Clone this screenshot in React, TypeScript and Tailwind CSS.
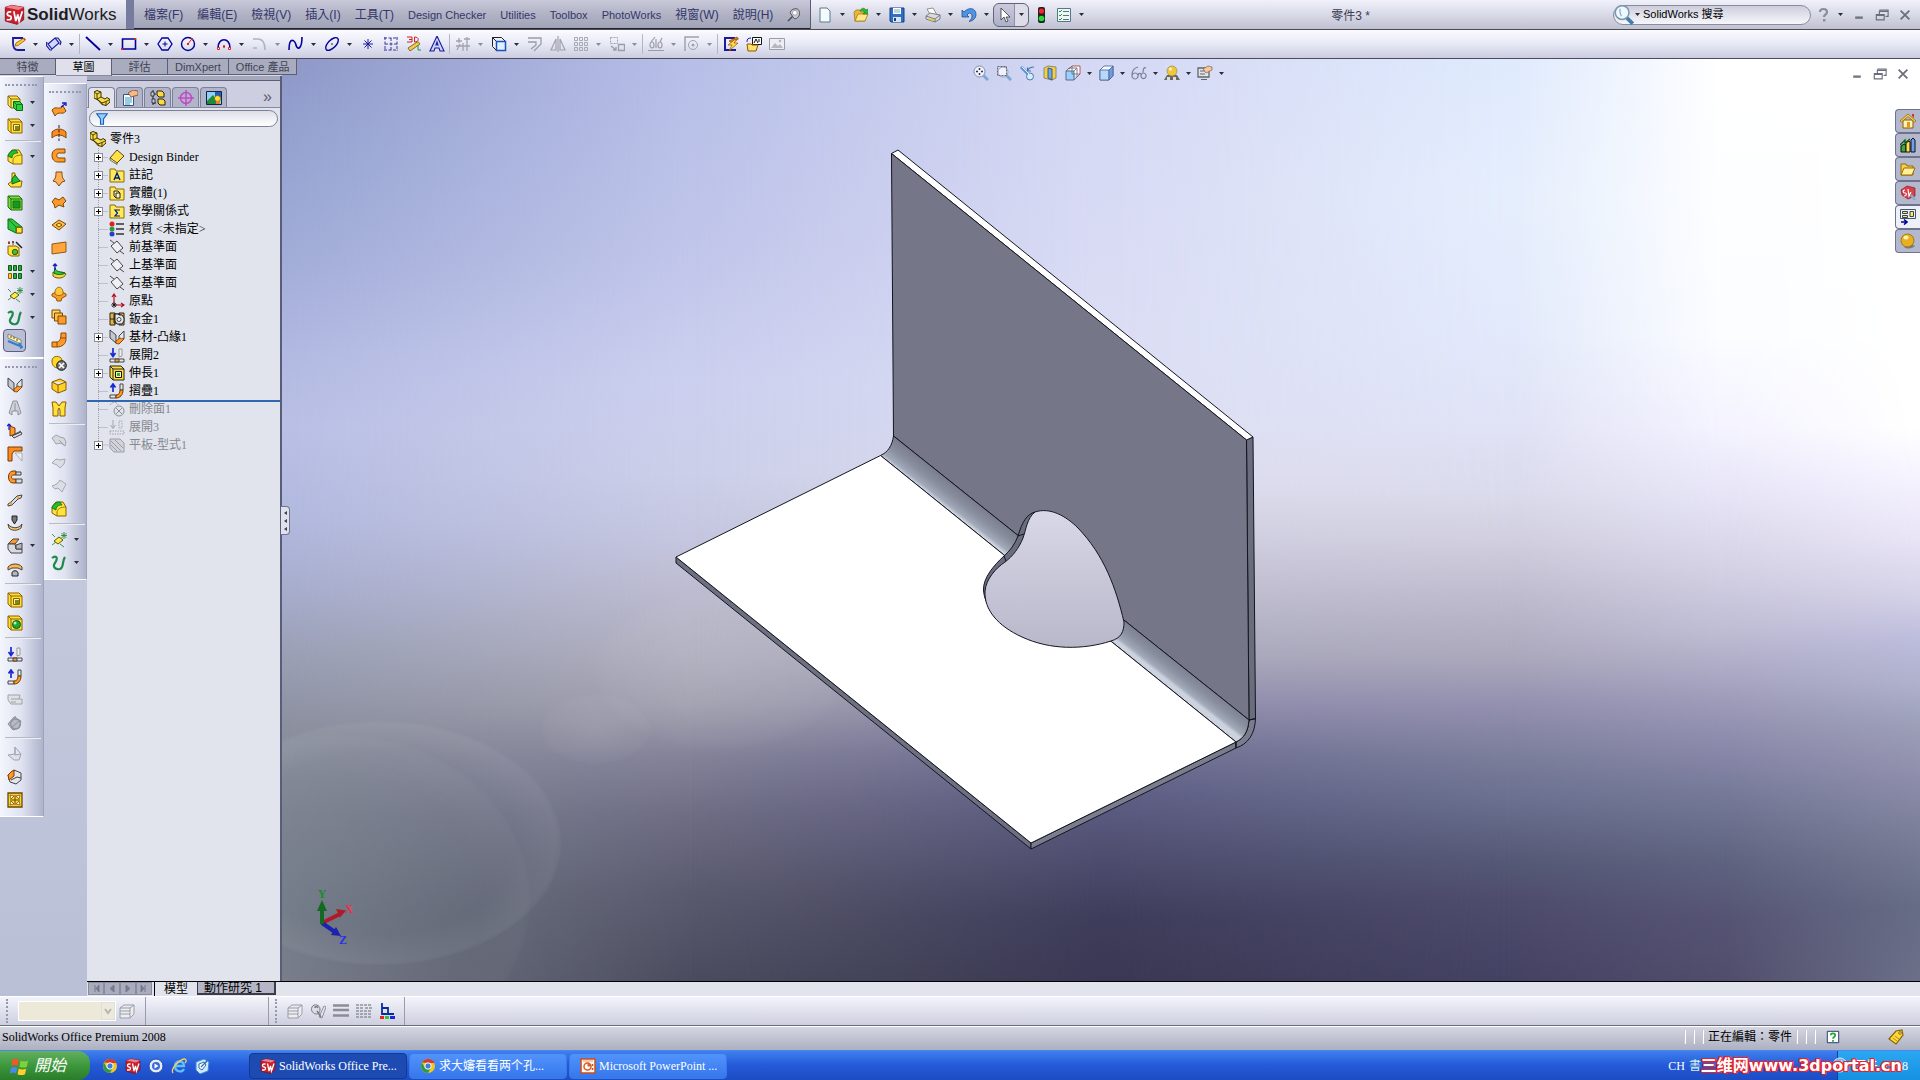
import React from 'react';
import { clsx } from 'clsx';

const ICONS: Record<string, React.ReactNode> = {
  // standard toolbar
  new: <path d="M3 1h7l3 3v11H3z" fill="#f4fbff" stroke="#5a7a86" />,
  open: (
    <>
      <path d="M1 5l2-2h4l1 2h4v9H2z" fill="#e8b83a" stroke="#a87a10" strokeWidth=".8" />
      <path d="M2 14l3-7h10l-3 7z" fill="#ffe88a" stroke="#a87a10" strokeWidth=".8" />
      <path d="M7 4c1-3 4-4 6-1l1.500-1v5H10l1.500-1.500C11 4 9 3.500 7 4z" fill="#2fb52f" stroke="#0a6a10" strokeWidth=".5" />
    </>
  ),
  save: (
    <>
      <path d="M1 1h14v14H2l-1-1z" fill="#2f6fc4" stroke="#153f86" />
      <path d="M4 1h8v6H4z" fill="#fff" />
      <path d="M5 3h6M5 5h6" stroke="#8aa4c8" />
      <path d="M4 10h8v5H4z" fill="#d8e4f4" />
      <path d="M5 11h2v3H5z" fill="#153f86" />
    </>
  ),
  print: (
    <>
      <path d="M2 2l6-1 4 7-6 1z" fill="#fff" stroke="#777" strokeWidth=".8" />
      <path d="M1 9l4-3 10 2v4l-5 3-9-3z" fill="#d8dade" stroke="#666" strokeWidth=".8" />
      <path d="M1 9l9 3 5-4M10 12v3" fill="none" stroke="#666" strokeWidth=".8" />
      <path d="M4 12l5 1.500" stroke="#e8c82a" strokeWidth="1.500" />
    </>
  ),
  undo: <path d="M1 3v7h7L6 8c2-3 5-2 5 1 0 2-1 4-3 5.500 4-.5 7-3.500 7-7C15 1 8-.5 3 5z" fill="#4f94e0" stroke="#1d4f9a" strokeWidth=".8" />,
  cursor: <path d="M5 1v12l3-3 2 5 2-1-2-4h4z" fill="#fff" stroke="#333" strokeWidth=".8" />,
  traffic: (
    <>
      <rect x="5" y="0" width="7" height="16" rx="2" fill="#222" />
      <circle cx="8.500" cy="4" r="2.600" fill="#f22" />
      <circle cx="8.500" cy="11.500" r="2.800" fill="#2d3" />
    </>
  ),
  options: (
    <>
      <path d="M1.500 1.500h13v13h-13z" fill="#eef7f4" stroke="#578" />
      <path d="M7 4.500h6M7 8.500h6M7 12.500h6" stroke="#578" />
      <path d="M3 4l1 1 2-2M3 8l1 1 2-2M3 12l1 1 2-2" fill="none" stroke="#1a9a3a" />
    </>
  ),
  // sketch toolbar
  sketch: (
    <>
      <path d="M13 2H3v5c0 5 2 7 5 7h7" fill="none" stroke="#1a1a9a" strokeWidth="1.800" />
      <path d="M5 10l1-3 8-5 1.500 2L8 9.500z" fill="#ffc83a" stroke="#8a4a00" strokeWidth=".7" />
      <path d="M13 2.500l1-.8 1.500 2-1 .7z" fill="#d8402a" />
    </>
  ),
  dimension: <path d="M2 8l7-6 4 5-7 6zM1 6l-1 3 4 5 2 0M9 2l3 0 3 4-1 3" fill="#cfd8ff" stroke="#1a1a9a" strokeWidth="1.200" />,
  line: <path d="M1 1l14 13" stroke="#00009a" strokeWidth="1.800" />,
  rect: (
    <>
      <path d="M1.500 3h13v10h-13z" fill="none" stroke="#00009a" strokeWidth="1.600" />
      <path d="M13 2h2v2h-2zM0 12h2v2H0z" fill="#d22" />
    </>
  ),
  polygon: (
    <>
      <path d="M5 2h6l4 6-4 6H5L1 8z" fill="none" stroke="#00009a" strokeWidth="1.300" />
      <path d="M8 5.500v5M5.500 8h5" stroke="#00009a" />
    </>
  ),
  circle: (
    <>
      <circle cx="8" cy="8" r="6.500" fill="none" stroke="#00009a" strokeWidth="1.400" />
      <path d="M8 8l3-4" stroke="#d22" />
      <path d="M7 7h2v2H7zM11 2h2v2h-2z" fill="#d22" />
    </>
  ),
  arc: (
    <>
      <path d="M2 12C2 1 14 1 14 12" fill="none" stroke="#00009a" strokeWidth="1.600" />
      <path d="M1.500 11.500h2v2h-2zM12.500 11.500h2v2h-2zM7.500 9.500h1v2h-1z" fill="#fff" stroke="#d22" />
    </>
  ),
  cornerFillet: <path d="M1 3h5c5 0 7 4 7 11M1 12h4" fill="none" stroke="#b0b2bc" strokeWidth="1.600" />,
  spline: <path d="M1 14c0-14 6-10 7-5s6 5 6-8" fill="none" stroke="#00009a" strokeWidth="1.600" />,
  ellipse: (
    <>
      <ellipse cx="8" cy="8" rx="8" ry="4" transform="rotate(-45 8 8)" fill="none" stroke="#00009a" strokeWidth="1.400" />
      <path d="M7 7l2 2M9 7l-2 2" stroke="#888" />
    </>
  ),
  point: <path d="M8 3v10M3 8h10M4.500 4.500l7 7M11.500 4.500l-7 7" stroke="#1a1a9a" />,
  cutGrid: <path d="M1 2h14M1 14h14M2 1v14M14 1v14M8 2v12M2 8h12" fill="none" stroke="#3a3a9a" strokeDasharray="3 1.500" />,
  sketch3d: (
    <>
      <path d="M1 1h5v5H1M3 3.500h3M8.500 1v5c5 0 5-5 0-5z" fill="none" stroke="#c22" />
      <path d="M2 12l2 3 10-7-2-2.500z" fill="#ffc83a" stroke="#553" strokeWidth=".8" />
      <path d="M12 9v5h3" fill="none" stroke="#1a9a3a" />
    </>
  ),
  textA: <path d="M8 0L1 15h4l1-3h4l1 3h4zM7 9l1-3 1 3z" fill="#cdd4ff" stroke="#1a1a9a" strokeWidth="1.100" />,
  trim: <path d="M1 5h6M9 3h6M1 10h14M4 2v5M12 1v14M5 8l-3 6M8 7v8" stroke="#a0a2ac" strokeWidth="1.300" fill="none" />,
  convert: (
    <>
      <path d="M1.500 1.500h9l4 4v9h-9l-4-4z" fill="#eef0f6" stroke="#222" />
      <path d="M1.500 1.500l4 4" stroke="#222" />
      <path d="M5.500 5.500h9v9h-9z" fill="#dff0ff" stroke="#1a50c0" strokeWidth="1.500" />
    </>
  ),
  offset: <path d="M1 2h13v6l-7 7M1 6h8v3l-5 4" fill="none" stroke="#9a9ca6" strokeWidth="1.300" />,
  mirror: <path d="M8 0v16M6 3L1 14h5zM10 3l5 11h-5z" fill="none" stroke="#a0a2ac" strokeWidth="1.200" />,
  pattern: (
    <path d="M1.500 1.500h3v3h-3zM6.500 1.500h3v3h-3zM11.500 1.500h3v3h-3zM1.500 6.500h3v3h-3zM6.500 6.500h3v3h-3zM11.500 6.500h3v3h-3zM1.500 11.500h3v3h-3zM6.500 11.500h3v3h-3zM11.500 11.500h3v3h-3z" fill="none" stroke="#a6a8b2" />
  ),
  move: (
    <>
      <path d="M1.500 1.500h7v6h-7z" fill="none" stroke="#a0a2ac" strokeDasharray="2 1" />
      <path d="M9.500 8.500h6v6h-6zM2 10l5 4M7 11v3H4" fill="none" stroke="#9a9ca6" strokeWidth="1.300" />
    </>
  ),
  relations: <path d="M0 14.500h16M8 3v9M2 9c0-4 4-4 4 0s-4 4-4 0M10 9c0-4 4-4 4 0s-4 4-4 0M3 6l4-5M12 6l2-4" fill="none" stroke="#9a9ca6" strokeWidth="1.200" />,
  snap: (
    <>
      <path d="M1 15V1h14" fill="none" stroke="#a0a2ac" strokeWidth="1.500" />
      <circle cx="9" cy="9" r="4.500" fill="none" stroke="#a0a2ac" />
      <circle cx="9" cy="9" r="1.500" fill="#a0a2ac" />
    </>
  ),
  rapid: (
    <>
      <path d="M12 2H2v12h11" fill="none" stroke="#1a1a9a" strokeWidth="2" />
      <path d="M6 5l8-4 1.500 2L9 7z" fill="#e87a2a" stroke="#7a3a00" strokeWidth=".6" />
      <path d="M11 4L5 9h4l-3 6 9-8h-4l3-4z" fill="#ffe03a" stroke="#a04a00" strokeWidth=".7" />
    </>
  ),
  block: (
    <>
      <path d="M6.500 1.500h9v7h-9z" fill="#fff" stroke="#111" />
      <path d="M8 7l2-4 2 4M13 3v3" fill="none" stroke="#111" />
      <path d="M1 8h4l1 1h6l-2 6H2z" fill="#ffe06a" stroke="#8a5a00" />
      <path d="M1 6c0-3 1-4 4-4" fill="none" stroke="#1a1ac0" />
    </>
  ),
  picture: (
    <>
      <path d="M.5 2.500h15v11H.5z" fill="#eceef4" stroke="#9a9ca6" />
      <path d="M2 12l4-5 3 3 2-2 3 4z" fill="#b4b6c0" />
      <circle cx="11" cy="5" r="1.300" fill="#b4b6c0" />
    </>
  ),
  // heads-up view toolbar
  zoomFit: (
    <>
      <path d="M10 10l5 5" stroke="#7fa8d4" strokeWidth="3" />
      <circle cx="6.500" cy="6.500" r="5.500" fill="#eef2fc" stroke="#858da4" />
      <path d="M6.500 3v2M6.500 8v2M3 6.500h2M8 6.500h2" stroke="#334" strokeWidth="1.500" />
    </>
  ),
  zoomArea: (
    <>
      <path d="M10 10l5 5" stroke="#7fa8d4" strokeWidth="3" />
      <circle cx="7" cy="7" r="5" fill="#eef2ff" stroke="#98a0b0" />
      <path d="M1.500 1.500h9v9h-9z" fill="none" stroke="#667" strokeDasharray="2 1" />
    </>
  ),
  previous: (
    <>
      <path d="M2 2l8 8" stroke="#5b93cc" strokeWidth="3" />
      <circle cx="11" cy="11.500" r="3.500" fill="#d6ecff" stroke="#4a7aac" />
      <path d="M3 2l7 7" stroke="#e4f2ff" strokeWidth="1" />
      <path d="M15 2c-3 0-5 1-6 3M8.500 2.500V6H12" stroke="#3f78b8" strokeWidth="1.200" fill="none" />
    </>
  ),
  section: (
    <>
      <path d="M2 3l4-2 8 1v11l-4 2-8-2z" fill="#f0cf4a" stroke="#776" strokeWidth=".8" />
      <path d="M6 3l4 1v11l-4-2z" fill="#6fa8e8" stroke="#345" strokeWidth=".8" />
    </>
  ),
  orient: (
    <>
      <path d="M4 4l3-3h8v8l-3 3" fill="#fff" stroke="#a33" strokeWidth=".8" />
      <path d="M1 6h8v9H1z" fill="#9ccfff" stroke="#456" strokeWidth=".8" />
      <path d="M1 6l3-3h8l-3 3M9 15l3-3V3M7 1v8h8" fill="none" stroke="#567" strokeWidth=".8" />
    </>
  ),
  shaded: (
    <>
      <path d="M2 5l4-4h9v10l-4 4H2z" fill="#f2f9ff" stroke="#44619a" strokeWidth=".8" />
      <path d="M2 5h9v10H2z" fill="#b8d8fa" stroke="#44619a" strokeWidth=".8" />
      <path d="M11 5l4-4v10l-4 4z" fill="#6f9cdc" stroke="#44619a" strokeWidth=".8" />
    </>
  ),
  glasses: (
    <path d="M7 2C3 3 1 6 1 10M15 3c-2-1-3 1-3 5M7 10c1-2 2-2 3-1M4 8a3 3 0 1 0 .1 0M12.500 8a2.500 2.800 0 1 0 .1 0" fill="none" stroke="#7a8094" strokeWidth="1.200" />
  ),
  scene: (
    <>
      <path d="M0 15l3-5h10l3 5z" fill="#666" />
      <path d="M3 12h3v3H3zM9 12h3v3H9z" fill="#ddd" />
      <circle cx="8" cy="6" r="5" fill="#f2c63a" stroke="#9a8a50" strokeWidth=".7" />
      <circle cx="6.500" cy="4" r="1.600" fill="#fff6c8" />
    </>
  ),
  viewSettings: (
    <>
      <path d="M1 3h11v9H1z" fill="#dfe4ee" stroke="#666" strokeWidth="1.300" />
      <path d="M4 14.500h6M3 6h6M3 9h5" stroke="#666" />
      <path d="M6 4l5-3 4 1v3l-6 3z" fill="#f2c9a0" stroke="#8a5a3a" strokeWidth=".7" />
    </>
  ),
  // window buttons
  minimize: <path d="M4 10h8v2H4z" fill="#777b88" stroke="#555966" strokeWidth=".5" />,
  restore: <path d="M5 2.500h10v7h-3M5 4h10M1.500 7.500h9v6h-9zM1 8.500h10M5 3v4" fill="none" stroke="#6a6e7c" strokeWidth="1.300" />,
  close: <path d="M3 3l10 10M13 3L3 13" stroke="#6a6e7c" strokeWidth="2" />,
  help: (
    <>
      <path d="M5 5c0-4 7-4 7 0 0 3-3 2-3 5" fill="none" stroke="#8a8e9c" strokeWidth="2.200" />
      <path d="M8 12h2.500v2.500H8z" fill="#8a8e9c" />
    </>
  ),
  pin: (
    <>
      <path d="M1 15l5-5" stroke="#444" strokeWidth="1.500" />
      <path d="M4 6c-1-2 2-5 5-5 4-1 6 3 5 7-1 3-4 5-6 4z" fill="#c9ccd6" stroke="#444" />
      <circle cx="9" cy="5.500" r="2.700" fill="#fff" stroke="#777" strokeWidth=".6" />
    </>
  ),
  search: (
    <>
      <path d="M10 10l5 5" stroke="#3f7fac" strokeWidth="3" />
      <circle cx="6.500" cy="6" r="5.500" fill="#eef8ff" stroke="#7a9ab2" strokeWidth="1.200" />
      <path d="M5 3c-1 2 0 4 1 6" stroke="#9ab" fill="none" />
    </>
  ),
  // task pane
  home: (
    <>
      <path d="M3 7h10v8H3z" fill="#fff2b0" stroke="#8a5a00" />
      <path d="M0 8l8-7 8 7-1.500 1L8 3.500 1.500 9z" fill="#ffd24a" stroke="#8a5a00" strokeWidth=".7" />
      <path d="M7 9h3v6H7z" fill="#d89a2a" />
      <path d="M12 1h2v4l-2-2z" fill="#c33" />
    </>
  ),
  library: (
    <>
      <path d="M1 9l3-2 2 1v7H1z" fill="#3aa83a" stroke="#111" />
      <path d="M6 6l3-2 1 1v10H6z" fill="#ffe04a" stroke="#111" />
      <path d="M11 3l2-2 2 2v12h-4z" fill="#6f9ff0" stroke="#111" />
      <path d="M0 8l5-5v3l5-4" fill="none" stroke="#0a5a10" strokeWidth="1.300" />
    </>
  ),
  folder: (
    <>
      <path d="M1 3h5l1 2h6v9H1z" fill="#f4d050" stroke="#9a6a00" />
      <path d="M1 14l3-7h11l-3 7z" fill="#ffee9a" stroke="#9a6a00" />
    </>
  ),
  swSearch: (
    <>
      <path d="M1 5l6-4 8 2v8l-7 3-6-4z" fill="#d8404a" stroke="#8a1a22" strokeWidth=".7" />
      <path d="M5 5c-3 0-2 3 0 3s2 3-1 3M8 4l1 7 2-4" stroke="#fff" fill="none" strokeWidth="1.200" />
      <path d="M11 10l4 5" stroke="#8aaccc" strokeWidth="2.500" />
    </>
  ),
  palette: (
    <>
      <path d="M.5.5h15v9H.5z" fill="#eef0f6" stroke="#456" />
      <path d="M2.500 2.500h5v2h-5zM10 2.500h3.500v5H10zM2.500 6.500h5v2h-5z" fill="#ffe860" stroke="#345" />
      <path d="M1 13h5M4 10.500L7 13l-3 2.500" stroke="#00009a" strokeWidth="1.600" fill="none" />
    </>
  ),
  sphere: (
    <>
      <path d="M4 14c4 3 9 1 11-1l-4-2z" fill="#556" opacity=".6" />
      <circle cx="7.500" cy="7.500" r="6.500" fill="#e8b020" stroke="#8a6200" strokeWidth=".7" />
      <ellipse cx="6" cy="4.500" rx="2.600" ry="2" fill="#fff3a8" />
    </>
  ),
  // features
  boss: (
    <>
      <path d="M1 1h9l3 3v9H4l-3-3z" fill="#ffe95a" stroke="#8a6200" />
      <path d="M1 1l3 3h9M4 4v9" fill="none" stroke="#8a6200" />
      <path d="M6.500 6.500h6l3 3v6h-6l-3-3z" fill="#2fcf3f" stroke="#0a6a14" />
      <path d="M6.500 6.500l3 3h6M9.500 9.500v6" fill="none" stroke="#0a6a14" strokeWidth=".8" />
    </>
  ),
  cut: (
    <>
      <path d="M1 1h11l3 3v11H4l-3-3z" fill="#ffdf3a" stroke="#8a6200" />
      <path d="M1 1l3 3h11M4 4v11" fill="none" stroke="#8a6200" />
      <path d="M6.500 6.500h6v6h-6z" fill="#fff29a" stroke="#8a6200" />
      <path d="M8 8h4v4H8z" fill="#7a8a1a" />
    </>
  ),
  fillet: (
    <>
      <path d="M1 6l4-5h7l3 5v9H6l-5-3z" fill="#ffe23a" stroke="#8a6200" />
      <path d="M1 7c1-4 4-6 8-6l2 3c-4 0-6 2-6 5z" fill="#1fbf2f" stroke="#0a6a14" strokeWidth=".8" />
      <path d="M6 15v-3c0-4 3-6 9-6" fill="none" stroke="#8a6200" strokeWidth=".8" />
    </>
  ),
  rib: (
    <>
      <path d="M5 1h3v8h7l-1 6H4l-3-3 4-3z" fill="#ffe23a" stroke="#8a6200" />
      <path d="M8 3l5 6-8 3V7z" fill="#1fbf2f" stroke="#0a6a14" />
    </>
  ),
  shell: (
    <>
      <path d="M1 1h11l3 3v11H4l-3-3z" fill="#6fe04a" stroke="#2a6a00" />
      <path d="M1 1l3 3h11M4 4v11" fill="none" stroke="#2a6a00" />
      <path d="M6 6h7v7H6z" fill="#0f9a20" stroke="#2a6a00" />
    </>
  ),
  draft: (
    <>
      <path d="M1 1h4l10 8v6H9L1 11z" fill="#2fc73f" stroke="#0a6a14" />
      <path d="M1 1l8 8v6M9 9h6" fill="none" stroke="#0a6a14" strokeWidth=".8" />
      <path d="M9.500 9.500h5.500v5.500H9.500z" fill="#ffe23a" stroke="#8a6200" />
    </>
  ),
  wizard: (
    <>
      <path d="M1 5h8l3 2v8H4l-3-2z" fill="#ffe23a" stroke="#8a6200" />
      <circle cx="8" cy="11" r="2.700" fill="#3fbf3f" stroke="#3a5a00" />
      <path d="M9 1l6 6M1 2h2M5 1h2" stroke="#222" strokeWidth="1.500" />
      <path d="M2 0v3M6 2v2" stroke="#c22" />
    </>
  ),
  dots: (
    <>
      <path d="M1.500 1.500h3v5h-3zM6.500 1.500h3v5h-3zM11.500 1.500h3v5h-3zM6.500 9.500h3v5h-3zM11.500 9.500h3v5h-3z" fill="#2fa83f" stroke="#0a5a14" />
      <path d="M1.500 9.500h3v5h-3z" fill="#ffc83a" stroke="#8a6200" />
    </>
  ),
  refGeo: (
    <>
      <path d="M1 2l3 3M9 12l4 3M1 13l4-3M13 0v7M10 3.500h6M10.500 1l5 5M15.500 1l-5 5" stroke="#2a8a3a" strokeWidth=".9" />
      <path d="M3 9l5-4 4 3-5 4z" fill="#ffe84a" stroke="#5a5a00" />
    </>
  ),
  curve: <path d="M1 3c5-4 6 1 3 5s1 7 5 6 2-8 5-12" fill="none" stroke="#1f8a4a" strokeWidth="2.200" />,
  measure: (
    <>
      <path d="M1 1l13 6v4L1 5z" fill="#fff6a8" stroke="#665" strokeWidth=".7" />
      <path d="M4 3v2M7 4v2M10 6v2" stroke="#444" />
      <path d="M1 8l12 5M13 15l2-1-3-4" stroke="#2f7fd0" strokeWidth="2" fill="none" />
    </>
  ),
  // sheet metal
  baseFlange: (
    <>
      <path d="M1 1l6 5v8l-6-5z" fill="#c4c8d0" stroke="#333" strokeWidth=".9" />
      <path d="M10 7l5-5v8l-5 5z" fill="#e4e6ea" stroke="#333" strokeWidth=".9" />
      <path d="M7 12l4-3c2 1 2 1 3 0l1 1-5 5-3-.5z" fill="#ff9a2a" stroke="#7a3a00" strokeWidth=".8" />
    </>
  ),
  lofted: <path d="M6 1h4l4 12-3 2v-4H5v4l-3-2zM8 3v8" fill="#d0d2d8" stroke="#8f929c" />,
  edgeFlange: (
    <>
      <path d="M3 3l5 2v6l-5 2z" fill="#ff9a2a" stroke="#7a3a00" />
      <path d="M5 13l9-4 1 2-8 4zM8 11l6-3" fill="#dcdee4" stroke="#444" />
      <path d="M2 7V1M0 3l2-2 2 2" stroke="#1a1ac0" fill="none" strokeWidth="1.200" />
    </>
  ),
  miter: (
    <>
      <path d="M1 1h14v4H7l-2 3v7H1z" fill="#ff8a1f" stroke="#7a3a00" />
      <path d="M8 7h7v8z" fill="#eef0f4" stroke="#888" strokeWidth=".6" />
    </>
  ),
  hem: (
    <>
      <path d="M9 2H6C0 2 0 14 6 14h3v-4H6c-2 0-2-4 0-4h3z" fill="#ff9a2a" stroke="#7a3a00" />
      <path d="M9 3h5v3H9zM9 10h6v4H9z" fill="#d8dae0" stroke="#444" />
    </>
  ),
  jog: (
    <>
      <path d="M1 12l3-2 6-6 5-1-1 3-3 1-6 6-4 1z" fill="#d8dae0" stroke="#444" />
      <path d="M3 12l2-1M10 6l2-1" stroke="#ff9a2a" strokeWidth="2.500" />
    </>
  ),
  sketchedBend: (
    <>
      <path d="M5 1h5v4l-2.500 4L5 5z" fill="#777" stroke="#222" />
      <path d="M1 9c3 5 11 5 14 0l-1 4c-4 3-9 3-12 0z" fill="#ffc86a" stroke="#444" />
    </>
  ),
  corner: (
    <>
      <path d="M1 6l5-5h6l-4 5z" fill="#ff9a2a" stroke="#444" />
      <path d="M1 6h7l1 5h6v4H4l-3-4z" fill="#d8dae0" stroke="#444" />
      <path d="M9 7l6-2v6H9z" fill="#b4b6be" stroke="#444" />
    </>
  ),
  form: (
    <>
      <path d="M1 6c3-4 11-4 14 0v3l-4-2H5L1 9z" fill="#ffb84a" stroke="#444" />
      <path d="M5 15v-3c0-3 6-3 6 0v3z" fill="#b4b6be" stroke="#222" />
    </>
  ),
  hole: (
    <>
      <path d="M1 1h11l3 3v11H4l-3-3z" fill="#ffdf3a" stroke="#8a6200" />
      <path d="M1 1l3 3h11M4 4v11" fill="none" stroke="#8a6200" />
      <circle cx="9.500" cy="9.500" r="4" fill="#1fa82f" stroke="#0a5a14" />
      <circle cx="8" cy="8" r="1.500" fill="#b8f0c0" />
    </>
  ),
  unfold: (
    <>
      <path d="M4 1v8M1.500 6L4 9.500 6.500 6" stroke="#1a2ad0" strokeWidth="1.700" fill="none" />
      <path d="M10 2h3v7l-3 1z" fill="#eee" stroke="#999" />
      <path d="M1 12h14v3H1z" fill="#e8eaee" stroke="#444" />
      <path d="M6 12h4v3H6z" fill="#ff9a2a" stroke="#444" />
    </>
  ),
  fold: (
    <>
      <path d="M4 9V1M1.500 4.500L4 1l2.500 3.500" stroke="#1a2ad0" strokeWidth="1.700" fill="none" />
      <path d="M11 1h3v6h-3zM1 12h6v3H1z" fill="#e8eaee" stroke="#444" />
      <path d="M11 7h3c0 5-3 8-7 8v-3c3 0 4-2 4-5z" fill="#ff9a2a" stroke="#6a3a00" />
    </>
  ),
  flatGray: <path d="M1 3h12l-1 4h3v5H4L1 8zM4 7h8M4 10h5" fill="#dfe1e6" stroke="#a0a2ac" />,
  noBends: (
    <>
      <path d="M8 1l1 2M1 9l6-7 7 4-2 7-6 2z" fill="#b8bac2" stroke="#8f929c" />
      <circle cx="8.500" cy="9" r="5" fill="none" stroke="#8f929c" strokeWidth="1.300" />
      <path d="M5 12l7-6" stroke="#8f929c" />
    </>
  ),
  ripGray: <path d="M8 1l6 7-2 6H7L1 9l7-1zM8 1v8l6-1" fill="#dfe1e6" stroke="#a0a2ac" />,
  weld: (
    <>
      <path d="M1 6l6-5 7 3v7l-5 4-6-2z" fill="#e4e6ea" stroke="#444" />
      <path d="M1 6l3-3 3-2v6l-5 4z" fill="#ff9a2a" stroke="#7a3a00" />
      <path d="M4 11l6-3 4 1" fill="none" stroke="#444" />
    </>
  ),
  vent: (
    <>
      <path d="M1 1h14v14H1z" fill="#ffcf3a" stroke="#6a4a00" strokeWidth="1.300" />
      <path d="M3 3l4 1-3 3zM13 3L9 4l3 3zM3 13l4-1-3-3zM13 13l-4-1 3-3z" fill="#fff8d8" stroke="#6a4a00" strokeWidth=".7" />
      <path d="M8 3v10M3 8h10" stroke="#6a4a00" />
    </>
  ),
  // surfaces
  surfExtrude: (
    <>
      <path d="M1 8c4-5 7 1 11-4l3 5c-4 5-7-1-11 5z" fill="#ff9a2a" stroke="#7a4a00" />
      <path d="M10 5l4-3M11 1h4v3" stroke="#1a1ac0" strokeWidth="1.300" fill="none" />
    </>
  ),
  surfRevolve: (
    <>
      <path d="M1 7c4-4 10-4 14 0v6c-4-4-10-4-14 0z" fill="#ff8a1f" stroke="#7a4a00" />
      <path d="M8 0v16" stroke="#222" strokeDasharray="3 1.500" />
    </>
  ),
  surfSweep: <path d="M14 1H7C-1 1-1 14 7 14h7v-4H8c-3 0-3-5 0-5h6z" fill="#ff9a2a" stroke="#7a4a00" />,
  surfLoft: <path d="M5 1h6c0 4 0 6 3 9l-3 1-3 4-3-4-3-1c3-3 3-5 3-9z" fill="#ffb05a" stroke="#8a4a00" />,
  surfBoundary: <path d="M1 8l3-4 4 2 4-3 3 4-3 3 1 3-5-2-4 3-1-4z" fill="#ff9a2a" stroke="#7a4a00" />,
  surfFill: (
    <>
      <path d="M1 8l7-5 7 4-7 6z" fill="#ffb84a" stroke="#7a4a00" />
      <path d="M5 8l3-2 3 2-3 2z" fill="#ffe84a" stroke="#7a4a00" />
    </>
  ),
  surfPlanar: <path d="M1 4l14-2v10L1 14z" fill="#ffa53a" stroke="#8a5a1a" />,
  surfExtend: (
    <>
      <path d="M2 9c3 2 9-2 13 2-2 5-10 5-13 2z" fill="#ffd23a" stroke="#6a5a00" />
      <path d="M4 5c1 4 6 4 10 5-2 2-9 2-11 0z" fill="#2fc73f" stroke="#0a6a14" />
      <path d="M4 7V1M2 3l2-2 2 2" stroke="#1a1ac0" strokeWidth="1.400" fill="none" />
    </>
  ),
  dome: (
    <>
      <path d="M1 8l4-2h6l4 2v2l-4 2-1 3H6l-1-3-4-2z" fill="#ff9a2a" stroke="#8a5a00" />
      <path d="M4 8c-1-9 9-9 8 0-2 2-6 2-8 0z" fill="#ffc83a" stroke="#8a5a00" strokeWidth=".8" />
    </>
  ),
  surfOffset: (
    <>
      <path d="M1 1h8v8H1z" fill="#ffd86a" stroke="#7a4a00" />
      <path d="M3.500 4h8v8h-8z" fill="#ffc04a" stroke="#7a4a00" />
      <path d="M7 7h8v8H7z" fill="#ff9a2a" stroke="#7a4a00" />
    </>
  ),
  surfRuled: <path d="M10 1h5v6c0 5-4 8-9 8H1v-5h4c4 0 5-3 5-9zM10 6h5M6 10v5" fill="#ff9a2a" stroke="#8a4a00" />,
  deleteFace: (
    <>
      <path d="M1 6c0-6 9-6 10-1l2 5-7 3c-4-1-5-4-5-7z" fill="#ffd82a" stroke="#8a6a00" />
      <circle cx="10.500" cy="10.500" r="4.800" fill="#777" stroke="#111" />
      <path d="M8 8l5 5M13 8l-5 5" stroke="#fff" strokeWidth="1.600" />
    </>
  ),
  surfBox: <path d="M1 4l8-3 6 3v8l-8 3-6-4zM1 4l6 3 8-3M7 7v8" fill="#ffd02a" stroke="#8a5a00" />,
  knit: <path d="M1 1h4l3 4 3-4h4l-1 6v8H9V9l-1-2-1 2v6H2V7z" fill="#ffe23a" stroke="#8a5a00" />,
  surfGray1: <path d="M1 6l4-3 4 2 4 1 2 4-1 4-4-3-5 1zM8 8l6 6" fill="#d6d8de" stroke="#a0a2ac" />,
  surfGray2: <path d="M1 8l4-4 4 1 5-1-1 5-4 4-3-3z" fill="#dcdee4" stroke="#a6a8b2" />,
  surfGray3: <path d="M1 8l5-2 3-4 6 4-4 8-4-4-3 1z" fill="#dcdee4" stroke="#a6a8b2" />,
  // feature tree
  part: (
    <>
      <path d="M0 2l3-1.500L7 2v5l4 2 2-1.500 3 2V12l-4 3.500-4-1-4-4.500L0 8z" fill="#f6dc4a" stroke="#3a2e00" />
      <path d="M0 2l3 2v5l5 4 4-1.500 4-2M3 4l4-2M8 13v1.500M12 11.500v4M3 9l4-2" fill="none" stroke="#3a2e00" strokeWidth=".9" />
    </>
  ),
  binder: (
    <>
      <path d="M1 9l7-8 7 6-7 7z" fill="#ffe04a" stroke="#5a4a00" />
      <path d="M1 9l7 5v1.500L1 11z" fill="#fff" stroke="#5a4a00" strokeWidth=".8" />
    </>
  ),
  notes: (
    <>
      <path d="M1 2h5l1 2h8v11H1z" fill="#ffe95a" stroke="#8a6a00" />
      <path d="M5 13l3-7 3 7M6 11h4" fill="none" stroke="#00207a" strokeWidth="1.400" />
    </>
  ),
  solids: (
    <>
      <path d="M1 2h5l1 2h8v11H1z" fill="#ffe95a" stroke="#8a6a00" />
      <path d="M5 6h4l2 2v5H7l-2-2zM7 8h4M7 8v5" fill="#fff7b0" stroke="#222" />
    </>
  ),
  equations: (
    <>
      <path d="M1 2h5l1 2h8v11H1z" fill="#ffe95a" stroke="#8a6a00" />
      <path d="M11 7H6l2.500 3L6 13h5" fill="none" stroke="#00207a" strokeWidth="1.200" />
    </>
  ),
  material: (
    <>
      <path d="M7 3h8M7 8h8M7 13h8" stroke="#333" strokeWidth="1.400" />
      <circle cx="3" cy="3" r="2.500" fill="#d22" />
      <circle cx="3" cy="8" r="2.500" fill="#2a9a3a" />
      <circle cx="3" cy="13" r="2.500" fill="#2a3ad0" />
    </>
  ),
  plane: <path d="M2 7l6-5 6 7-6 5zM1 1l4 3M11 12l4 3" fill="#eef0f6" stroke="#333" strokeWidth=".9" />,
  origin: (
    <>
      <path d="M5 12V2M3 4l2-3 2 3M5 12h9M12 10l3 2-3 2" fill="none" stroke="#b01020" strokeWidth="1.200" />
      <path d="M5 9v6M2 12h6M3 10l4 4M7 10l-4 4" stroke="#111" strokeWidth=".8" />
    </>
  ),
  sheetMetal: (
    <>
      <path d="M1 2h5v12H1zM1 8h5M10 2h5v12h-5zM5 3h6v9H5z" fill="#e8b43a" stroke="#222" />
      <path d="M6 3h3l1 1h3l2 3v3l-2 3H8l-2-3z" fill="#e4e6ea" stroke="#222" />
      <circle cx="10" cy="8.500" r="2" fill="#fff" stroke="#222" strokeWidth=".8" />
    </>
  ),
  extrudeTree: (
    <>
      <path d="M1 1h11l3 3v11H4l-3-3z" fill="#ffdf3a" stroke="#222" />
      <path d="M1 1l3 3h11M4 4v11" fill="none" stroke="#222" />
      <path d="M6.500 6.500h6v6h-6z" fill="#fff7a0" stroke="#111" />
      <path d="M8 8h3v3H8z" fill="#2fae4a" />
    </>
  ),
  deleteGray: (
    <>
      <path d="M1 4c3-4 7-3 8 0" fill="none" stroke="#a2a4ac" strokeDasharray="2 1" />
      <circle cx="10" cy="10" r="5" fill="none" stroke="#8e9098" />
      <path d="M7 7l6 6M13 7l-6 6" stroke="#8e9098" />
    </>
  ),
  unfoldGray: (
    <>
      <path d="M4 1v8M1.500 6L4 9.500 6.500 6" stroke="#a2a4ac" fill="none" />
      <path d="M10 2h3v7h-3zM1 12h14v3H1z" fill="none" stroke="#a2a4ac" strokeDasharray="1.500 1" />
    </>
  ),
  flatPattern: <path d="M1 2h10l4 4v9H5l-4-4zM2 4l10 10M6 3l8 8M2 8l6 6" fill="#d2d4da" stroke="#9a9ca6" />,
  // manager tabs
  property: (
    <>
      <path d="M1.500 4.500h10v11h-10z" fill="#fff" stroke="#357" />
      <path d="M3 8h7M3 10h7M3 12h7M3 14h5" stroke="#39c" />
      <path d="M6 3l5-3 5 1v4l-7 2z" fill="#f2b98a" stroke="#7a4a2a" strokeWidth=".8" />
    </>
  ),
  config: (
    <>
      <path d="M3 0v15M3 4h3M3 13h3" stroke="#222" fill="none" />
      <path d="M7 1h5l2 2v4H9L7 5zM8 9h5l2 2v4h-5l-2-2z" fill="#ffd83a" stroke="#222" />
      <path d="M1 2h3v4H1zM2 9h3v4H2z" fill="#c8ccd8" stroke="#222" strokeWidth=".8" />
    </>
  ),
  target: (
    <>
      <circle cx="8" cy="8" r="5.500" fill="none" stroke="#c04ac8" strokeWidth="1.500" />
      <path d="M8 0v16M0 8h16" stroke="#c04ac8" strokeWidth="1.500" />
    </>
  ),
  display: (
    <>
      <path d="M.5 1.500h15v13H.5z" fill="#8fd0f4" stroke="#124" />
      <path d="M1 14v-3l6-6 6 9z" fill="#1f8a3a" />
      <path d="M9 2h6v5H9z" fill="#1f5fc0" />
      <circle cx="11.500" cy="8.500" r="3" fill="#ffe03a" stroke="#650" strokeWidth=".7" />
      <path d="M10 11h4v3h-4z" fill="#e8803a" />
    </>
  ),
  funnel: <path d="M1 1h14L10 8v7H6V8z" fill="#8fd0ff" stroke="#1f5fb8" strokeWidth="1.500" />,
  // bottom toolbar
  cubeGray: <path d="M1 5l4-3h10v9l-4 4H1zM1 5h10l4-3M11 5v10M1 8h10M1 11h10" fill="#eceef2" stroke="#9a9ca6" />,
  paint: (
    <>
      <path d="M9 14L14 3l2 1-4 11z" fill="#e4e6ea" stroke="#8f929c" />
      <path d="M2 4c2-4 8-2 8 2s-2 5-4 5-6-3-4-7z" fill="#dcdee4" stroke="#777a84" />
      <path d="M7 8l4 6M5 5c0-2 2-2 3 0" fill="none" stroke="#777a84" strokeWidth="1.500" />
    </>
  ),
  lineWeight: <path d="M0 2.500h16M0 7h16M0 12.500h16" stroke="#8a8c96" strokeWidth="2.500" />,
  lineStyle: <path d="M0 2h16M0 5h7M9 5h7M0 8h16M0 11h16M0 14h16" stroke="#8f929c" strokeWidth="1.500" strokeDasharray="3 1" />,
  lineColor: (
    <>
      <path d="M3 0v11h12M3 5h6v6" fill="none" stroke="#0a2aa0" strokeWidth="1.800" />
      <path d="M1 13h4v3H1z" fill="#e22" />
      <path d="M6 13h4v3H6z" fill="#2c3" />
      <path d="M11 13h5v3h-5z" fill="#22d" />
    </>
  ),
  // windows shell
  sw: (
    <>
      <path d="M1 2.500L6 1l9 1.500V12l-5 3.500L1 13z" fill="#c8202c" stroke="#7a0a14" strokeWidth=".6" />
      <path d="M1 2.500L6 1l9 1.500-4 2z" fill="#f0808a" />
      <path d="M5.500 6H4C2 6 2 9 4 9s2 3 0 3H2M7.500 5.500L9 13l1.500-5 1 5L14 5.500" stroke="#fff" fill="none" strokeWidth="1.300" />
    </>
  ),
  chrome: (
    <>
      <circle cx="8" cy="8" r="7" fill="#f2c81f" />
      <path d="M2 4.500a7 7 0 0 1 12.500.5H8z" fill="#d8382a" />
      <path d="M2 4.500A7 7 0 0 0 8 15l3-5.500-6 .5z" fill="#2f9a44" />
      <circle cx="8" cy="8" r="3.200" fill="#3f7fe0" stroke="#fff" />
    </>
  ),
  media: (
    <>
      <circle cx="8" cy="8" r="7" fill="#e4ecf8" stroke="#2a4a9a" />
      <circle cx="8" cy="8" r="4" fill="#3a6ad8" />
      <path d="M6.500 5.500v5l4-2.500z" fill="#fff" />
    </>
  ),
  ie: (
    <>
      <path d="M13 11c-2 4-9 3-9-3s9-6 9 0H5" fill="none" stroke="#5fc0ff" strokeWidth="2.300" />
      <path d="M2 15C-1 11 9 1 14 1c2 1 1 3 0 4" fill="none" stroke="#ffd34a" strokeWidth="1.300" />
    </>
  ),
  desktop: (
    <>
      <path d="M2 4l8-3 5 3-1 9-8 3-4-4z" fill="#cfeaff" stroke="#3a8ad0" />
      <path d="M5 6l5-2 2 3-4 5-3-2z" fill="#fff" stroke="#2a6ab0" />
      <path d="M7 9l6-6" stroke="#2a6ab0" strokeWidth="1.300" />
    </>
  ),
  ppt: (
    <>
      <path d="M1 1h14v14H1z" fill="#fff3ea" stroke="#c8501f" strokeWidth="1.500" />
      <circle cx="7.500" cy="8.500" r="3.500" fill="#fff" stroke="#d8602a" strokeWidth="1.500" />
      <path d="M7.500 8.500V5a3.500 3.500 0 0 1 3.500 3.500z" fill="#d8602a" />
      <path d="M3 3h10" stroke="#e8a07a" />
      <path d="M12.500 6v2M12.500 10v2" stroke="#c8501f" strokeWidth="1.500" />
    </>
  ),
  flag: (
    <>
      <path d="M2 3c2-1 4-1 5 0L6 8C5 7 3 7 1 8z" fill="#f2562a" />
      <path d="M8.500 3.500c2 1 4 1 6 0l-1 5c-2 1-4 1-6 0z" fill="#7fd03a" />
      <path d="M.8 9.500c2-1 4-1 5 0l-1 4.500c-1-1-3-1-5 0z" fill="#4a8af0" />
      <path d="M7 10c2 1 4 1 6 0l-1 4.500c-2 1-4 1-6 0z" fill="#ffcf2a" />
    </>
  ),
  tag: (
    <>
      <path d="M1 10l7-8 6-1 1 5-7 9z" fill="#ffd83a" stroke="#8a6200" strokeWidth="1.200" />
      <circle cx="12" cy="4" r="1.300" fill="#fff" stroke="#8a6200" />
      <path d="M5 9l4 3M7 7l4 3" stroke="#b88a1a" />
    </>
  ),
  helpBox: (
    <>
      <path d="M1.500 1.500h13v13h-13z" fill="#fff" stroke="#14285a" />
      <path d="M5.500 6c0-3 5-3 5 0 0 2-2.500 2-2.500 4M8 11.500v2" fill="none" stroke="#1aa83a" strokeWidth="2" />
    </>
  ),
  tray: (
    <>
      <circle cx="8" cy="8" r="7" fill="#6fb4f0" stroke="#cfe6ff" />
      <path d="M10 4L6 8l4 4" stroke="#fff" strokeWidth="2" fill="none" />
    </>
  ),
};

function Icon({ name, className = 'h-4 w-4' }: { name: string; className?: string }) {
  return (
    <svg viewBox="0 0 16 16" className={clsx('shrink-0', className)} aria-hidden="true">
      {ICONS[name]}
    </svg>
  );
}

function Arrow({ muted }: { muted?: boolean }) {
  return (
    <svg viewBox="0 0 5 3" className="h-[3px] w-[5px]" aria-hidden="true">
      <path d="M0 0h5L2.500 3z" fill={muted ? '#8a8c96' : '#2a2c3a'} />
    </svg>
  );
}

type Tool = { icon: string; menu?: boolean; muted?: boolean } | 'sep';

const t = (icon: string): Tool => ({ icon });
const m = (icon: string): Tool => ({ icon, menu: true });
const mm = (icon: string): Tool => ({ icon, menu: true, muted: true });

const MENUS = [
  { label: '檔案(F)', cjk: true },
  { label: '編輯(E)', cjk: true },
  { label: '檢視(V)', cjk: true },
  { label: '插入(I)', cjk: true },
  { label: '工具(T)', cjk: true },
  { label: 'Design Checker' },
  { label: 'Utilities' },
  { label: 'Toolbox' },
  { label: 'PhotoWorks' },
  { label: '視窗(W)', cjk: true },
  { label: '說明(H)', cjk: true },
];

const SKETCH_TOOLS: Tool[] = [
  m('sketch'), m('dimension'), 'sep',
  m('line'), m('rect'), t('polygon'), m('circle'), m('arc'), mm('cornerFillet'), m('spline'), m('ellipse'),
  t('point'), t('cutGrid'), t('sketch3d'), t('textA'), 'sep',
  mm('trim'), m('convert'), t('offset'), t('mirror'), mm('pattern'), mm('move'), 'sep',
  mm('relations'), mm('snap'), 'sep',
  t('rapid'), t('block'), t('picture'),
];

const VIEW_TOOLS: Tool[] = [t('zoomFit'), t('zoomArea'), t('previous'), t('section'), m('orient'), m('shaded'), m('glasses'), m('scene'), m('viewSettings')];

const FEATURE_TOOLS: Tool[] = [m('boss'), m('cut'), 'sep', m('fillet'), t('rib'), t('shell'), t('draft'), t('wizard'), m('dots'), m('refGeo'), m('curve'), t('measure')];

const SHEET_TOOLS: Tool[] = [
  t('baseFlange'), t('lofted'), t('edgeFlange'), t('miter'), t('hem'), t('jog'), t('sketchedBend'), m('corner'), t('form'), 'sep',
  t('cut'), t('hole'), 'sep',
  t('unfold'), t('fold'), t('flatGray'), t('noBends'), 'sep',
  t('ripGray'), t('weld'), t('vent'),
];

const SURFACE_TOOLS: Tool[] = [
  t('surfExtrude'), t('surfRevolve'), t('surfSweep'), t('surfLoft'), t('surfBoundary'), t('surfFill'), t('surfPlanar'), t('surfExtend'),
  t('dome'), t('surfOffset'), t('surfRuled'), t('deleteFace'), t('surfBox'), t('knit'), 'sep',
  t('surfGray1'), t('surfGray2'), t('surfGray3'), t('fillet'), 'sep',
  m('refGeo'), m('curve'),
];

interface TreeNode {
  label: string;
  icon: string;
  expandable?: boolean;
  muted?: boolean;
}

const TREE: TreeNode[] = [
  { label: 'Design Binder', icon: 'binder', expandable: true },
  { label: '註記', icon: 'notes', expandable: true },
  { label: '實體(1)', icon: 'solids', expandable: true },
  { label: '數學關係式', icon: 'equations', expandable: true },
  { label: '材質 <未指定>', icon: 'material' },
  { label: '前基準面', icon: 'plane' },
  { label: '上基準面', icon: 'plane' },
  { label: '右基準面', icon: 'plane' },
  { label: '原點', icon: 'origin' },
  { label: '鈑金1', icon: 'sheetMetal' },
  { label: '基材-凸緣1', icon: 'baseFlange', expandable: true },
  { label: '展開2', icon: 'unfold' },
  { label: '伸長1', icon: 'extrudeTree', expandable: true },
  { label: '摺疊1', icon: 'fold' },
];

const ROLLED_BACK: TreeNode[] = [
  { label: '刪除面1', icon: 'deleteGray', muted: true },
  { label: '展開3', icon: 'unfoldGray', muted: true },
  { label: '平板-型式1', icon: 'flatPattern', expandable: true, muted: true },
];

function ToolRow({ tools, narrow }: { tools: Tool[]; narrow?: boolean }) {
  return (
    <div className="flex items-center">
      {tools.map((tool, i) =>
        tool === 'sep' ? (
          <span key={i} className="mx-px h-5 w-px bg-[#b4b6c8]" />
        ) : (
          <React.Fragment key={i}>
            <button aria-label={tool.icon} className="flex h-6 w-[23px] items-center justify-center">
              <Icon name={tool.icon} />
            </button>
            {tool.menu && (
              <button aria-label={`${tool.icon} menu`} className={clsx('flex h-6 items-center justify-center', narrow ? 'w-[10px]' : 'w-[13px]')}>
                <Arrow muted={tool.muted} />
              </button>
            )}
          </React.Fragment>
        ),
      )}
    </div>
  );
}

function ToolColumn({ tools, pressed, className }: { tools: Tool[]; pressed?: string; className?: string }) {
  return (
    <div
      className={clsx(
        'flex flex-col border-t border-r border-b border-t-white border-r-[#a0a3b8] border-b-white bg-linear-to-r from-[#f4f6fd] via-[#dfe2f0] to-[#aeb3cc] pb-[5px] pl-[3px]',
        className,
      )}
    >
      <span className="mx-0.5 mt-[7px] mb-[5px] w-8 border-t-2 border-dotted border-[#9498b0]" />
      {tools.map((tool, i) =>
        tool === 'sep' ? (
          <span key={i} className="my-[3px] ml-0.5 h-0.5 w-9 border-t border-b border-t-[#b8bac6] border-b-[#eceef4]" />
        ) : (
          <div key={i} className="flex h-[23px] items-center">
            <button
              aria-label={tool.icon}
              className={clsx(
                'flex h-[23px] w-[23px] items-center justify-center',
                tool.icon === pressed && 'rounded-sm border border-[#5c6080] bg-[#b9bdd6]',
              )}
            >
              <Icon name={tool.icon} />
            </button>
            {tool.menu && (
              <button aria-label={`${tool.icon} menu`} className="flex h-[23px] w-[13px] items-center justify-center">
                <Arrow />
              </button>
            )}
          </div>
        ),
      )}
    </div>
  );
}

function TitleBar() {
  return (
    <header className="flex h-[30px] shrink-0 items-stretch border-b border-[#4a4c58] bg-linear-to-b from-[#f0f1fa] via-[#d9dae8] to-[#bfc1d2]">
      <div className="flex w-[126px] items-center gap-0.5 pl-1">
        <Icon name="sw" className="h-[21px] w-[21px]" />
        <span className="text-[17px] leading-none text-[#1c1c24]">
          <b>Solid</b>Works
        </span>
      </div>
      <div className="w-2 bg-[#767c9e]" />
      <nav className="flex w-[676px] items-center gap-3.5 border-b border-[#22232c] bg-linear-to-b from-[#c8cada] via-[#b1b3c5] to-[#a0a2b6] pt-0.5 pl-2.5 text-[#33366a]">
        {MENUS.map(({ label, cjk }) => (
          <button key={label} className={clsx('whitespace-nowrap', cjk ? 'text-xs' : 'text-[11px]')}>
            {label}
          </button>
        ))}
        <button aria-label="pin">
          <Icon name="pin" className="h-3.5 w-3.5" />
        </button>
      </nav>
      <div className="flex items-center border-l border-[#5a5c6c] pl-0.5">
        <ToolRow tools={[m('new'), m('open'), m('save'), m('print'), m('undo')]} />
        <div className="flex h-6 w-9 items-stretch rounded-md border border-[#62657a] bg-linear-to-b from-[#c9cadd] to-[#aeb0c8]">
          <button aria-label="select" className="flex flex-1 items-center justify-center">
            <Icon name="cursor" />
          </button>
          <button aria-label="select menu" className="flex w-3.5 items-center justify-center rounded-r-md border-l border-[#8e90a6] bg-[#dcdde8]">
            <Arrow />
          </button>
        </div>
        <ToolRow tools={[t('traffic'), m('options')]} />
      </div>
      <h1 className="flex flex-1 items-center justify-center pt-0.5 text-xs text-[#3a3c50]">零件3 *</h1>
      <div className="flex items-center">
        <label className="flex h-5 w-[198px] items-center gap-px rounded-full border border-[#8a8da0] bg-linear-to-b from-[#cdcedb] to-[#f6f6fb]">
          <Icon name="search" className="h-5 w-5" />
          <Arrow />
          <input aria-label="search" defaultValue="SolidWorks 搜尋" className="ml-0.5 w-32 bg-transparent text-[11px] text-black outline-none" />
        </label>
        <div className="flex items-center pr-1">
          <ToolRow tools={[m('help')]} />
          {['minimize', 'restore', 'close'].map((name) => (
            <button key={name} aria-label={name} className="flex h-6 w-[23px] items-center justify-center">
              <Icon name={name} className="h-3.5 w-3.5" />
            </button>
          ))}
        </div>
      </div>
    </header>
  );
}

const COMMAND_TABS = ['特徵', '草圖', '評估', 'DimXpert', 'Office 產品'];

function CommandTabs() {
  return (
    <nav className="z-10 col-span-3 col-start-1 row-start-1 flex items-start justify-self-start text-[11px] leading-[14px]">
      {COMMAND_TABS.map((label) => (
        <button
          key={label}
          className={clsx(
            'min-w-14 border-r border-b border-[#5c5f70] px-[7px] whitespace-nowrap',
            label === '草圖' ? 'h-[17px] border-b-[#8a8c9a] bg-[#dfe0ec] text-black' : 'h-4 bg-[#a9acbf] text-[#3f4254]',
          )}
        >
          {label}
        </button>
      ))}
    </nav>
  );
}

function TreeRow({ node, last }: { node: TreeNode; last?: boolean }) {
  return (
    <li className="flex h-[18px] items-center">
      <span className="grid w-[22px] items-center">
        <svg viewBox="0 0 22 18" className="col-start-1 row-start-1 h-[18px] w-[22px]" aria-hidden="true">
          <path d={last ? 'M11.500 0v9h10' : 'M11.500 0v18M11.500 9.500h10'} fill="none" stroke="#9a9cac" strokeDasharray="1 1" />
        </svg>
        {node.expandable && (
          <button
            aria-label={`expand ${node.label}`}
            className="col-start-1 row-start-1 ml-[7px] flex h-[9px] w-[9px] items-center justify-center border border-[#8a8c98] bg-white"
          >
            <svg viewBox="0 0 5 5" className="h-[5px] w-[5px]">
              <path d="M2 0h1v2h2v1H3v2H2V3H0V2h2z" fill="#000" />
            </svg>
          </button>
        )}
      </span>
      <Icon name={node.icon} />
      <span className={clsx('ml-1 text-xs leading-[18px] whitespace-nowrap', node.muted ? 'text-[#85878f]' : 'text-black')}>{node.label}</span>
    </li>
  );
}

function FeatureManager() {
  return (
    <section className="relative col-start-2 row-start-2 flex flex-col border-r-2 border-[#5a5d78] bg-[#e1e4ec]">
      <div className="flex flex-col bg-[#cdcfe0]">
        <div className="h-[5px] border-b border-[#5c5f78] bg-[#a5a8bc]" />
        <div className="mt-1.5 flex h-[21px] items-stretch gap-px border-b border-[#8488a0] pl-px">
          {['part', 'property', 'config', 'target', 'display'].map((name) => (
            <button
              key={name}
              aria-label={name}
              className={clsx(
                'flex w-[27px] items-center justify-center rounded-t border border-b-0 border-[#7c8098]',
                name === 'part' ? '-mb-px bg-[#e1e4ec]' : 'bg-[#b2b5ca]',
              )}
            >
              <Icon name={name} />
            </button>
          ))}
          <button aria-label="more" className="mr-2 ml-auto text-base leading-[18px] text-[#5a5d70]">
            »
          </button>
        </div>
      </div>
      <label className="mx-0.5 mt-0.5 flex h-[17px] items-center rounded-full border border-[#7c8098] bg-linear-to-b from-[#dcdfe8] to-white pl-1.5">
        <Icon name="funnel" className="h-3 w-3" />
        <input aria-label="filter" className="ml-1 w-36 bg-transparent text-xs outline-none" />
      </label>
      <div className="mt-[3px] font-['Liberation_Serif','Noto_Sans_CJK_TC',serif]">
        <div className="flex h-[18px] items-center gap-1 pl-[3px] text-xs">
          <Icon name="part" />
          零件3
        </div>
        <ul>
          {TREE.map((node) => (
            <TreeRow key={node.label} node={node} />
          ))}
        </ul>
        <div className="relative -mb-0.5 h-0.5 bg-[#2f67b0]" />
        <ul>
          {ROLLED_BACK.map((node, i) => (
            <TreeRow key={node.label} node={node} last={i === ROLLED_BACK.length - 1} />
          ))}
        </ul>
      </div>
      <button
        aria-label="collapse panel"
        className="absolute top-[430px] -right-2.5 z-10 flex h-[29px] w-[9px] flex-col items-center justify-center gap-1 rounded-r border border-l-0 border-[#70748e] bg-[#dfe1ec]"
      >
        {[0, 1, 2].map((i) => (
          <svg key={i} viewBox="0 0 3 4" className="h-1 w-[3px]">
            <path d="M3 0v4L0 2z" fill="#3a3d50" />
          </svg>
        ))}
      </button>
    </section>
  );
}

// Sky-like backdrop: each layer is a vertical gradient that fades in over the one to its left.
function Backdrop() {
  return (
    <div className="absolute inset-0" aria-hidden="true">
      <div className="absolute inset-0 bg-[linear-gradient(to_bottom,#8e98c8_0%,#97a5d2_12%,#a2add8_22%,#b2b9e2_32%,#bac0e5_40%,#b2b9de_50%,#a8aecf_57%,#9a9fb4_65%,#8b8f9e_73%,#7d8491_82%,#747d89_93%,#7a7e8b_100%)]" />
      <div className="absolute inset-0 bg-[linear-gradient(to_bottom,#b7bfe8_0%,#c0c5ea_20%,#ccd0ef_35%,#cccfe9_45%,#c5c6df_52%,#bcbbcf_58%,#b0afbf_64%,#a09fae_70%,#828198_76%,#6e6d84_82%,#5b5b6f_90%,#4a4c5e_100%)] [mask-image:linear-gradient(to_right,transparent_0%,#000_25%)]" />
      <div className="absolute inset-0 bg-[linear-gradient(to_bottom,#d5d9f4_0%,#d9dbf4_20%,#dcdef4_35%,#dddeef_45%,#d2d1e3_51%,#bfbdcf_58%,#a9a7bb_65%,#8f8cab_70%,#706f94_75%,#5e5d84_80%,#4d4c6e_87%,#3e3d5b_93%,#3a3853_100%)] [mask-image:linear-gradient(to_right,transparent_25%,#000_50%)]" />
      <div className="absolute inset-0 bg-[linear-gradient(to_bottom,#dfeafd_0%,#e5eefd_15%,#e2e9fb_30%,#e0e2f5_40%,#dadbec_47%,#d1cfe0_52%,#bfbccf_58%,#aba8bc_65%,#9390b0_70%,#797d99_76%,#6b7190_80%,#555976_87%,#4f4d6d_91%,#444263_100%)] [mask-image:linear-gradient(to_right,transparent_50%,#000_75%)]" />
      <div className="absolute inset-0 bg-[linear-gradient(to_bottom,#ffffff_0%,#fbfdff_30%,#f4f3ff_40%,#e7e5f7_47%,#d5d2e5_55%,#bfbdd4_62%,#9c9ab8_70%,#8684a6_76%,#747997_80%,#5e6380_87%,#565474_93%,#504d6c_100%)] [mask-image:linear-gradient(to_right,transparent_75%,#000_88%)]" />
      <div className="absolute inset-0 bg-[linear-gradient(to_bottom,#ffffff_0%,#ffffff_40%,#f6f4ff_45%,#e9e4f6_52%,#d5d2e8_58%,#bcbcdc_63%,#aeb0cc_68%,#9da0b8_72%,#9190ae_77%,#787c96_85%,#666c86_92%,#6c7088_100%)] [mask-image:linear-gradient(to_right,transparent_88%,#000_100%)]" />
    </div>
  );
}

function Model() {
  const line = { stroke: '#15151f', strokeWidth: 1, strokeLinejoin: 'round' as const };
  return (
    <svg viewBox="282 59 1638 922" className="absolute inset-0 h-full w-full" aria-label="bracket">
      <defs>
        <linearGradient id="bend" gradientUnits="userSpaceOnUse" x1="893.500" y1="436" x2="879" y2="454.500">
          <stop offset="0" stopColor="#787b8d" />
          <stop offset=".5" stopColor="#8a909f" />
          <stop offset=".85" stopColor="#a2a9b8" />
          <stop offset="1" stopColor="#ccd2de" />
        </linearGradient>
        <linearGradient id="opening" x1="0" y1="0" x2="0" y2="1">
          <stop offset="0" stopColor="#d8d8e8" />
          <stop offset="1" stopColor="#b9b7ca" />
        </linearGradient>
        <radialGradient id="rim">
          <stop offset=".75" stopColor="#fff" stopOpacity="0" />
          <stop offset=".97" stopColor="#e4f0ec" stopOpacity=".06" />
          <stop offset="1" stopColor="#e4f0ec" stopOpacity=".03" />
        </radialGradient>
        <radialGradient id="glow">
          <stop offset="0" stopColor="#fff" stopOpacity=".08" />
          <stop offset=".9" stopColor="#fff" stopOpacity=".03" />
          <stop offset="1" stopColor="#fff" stopOpacity=".01" />
        </radialGradient>
      </defs>

      <ellipse cx="379" cy="843" rx="182" ry="122" fill="url(#rim)" />
      <ellipse cx="340" cy="900" rx="190" ry="165" fill="url(#rim)" opacity=".5" />
      <ellipse cx="596" cy="729" rx="55" ry="35" fill="url(#glow)" />
      <ellipse cx="721" cy="671" rx="126" ry="78" fill="url(#glow)" />

      <g {...line}>
        <path d="M676 557L1031 843V849L676 563z" fill="#6d7080" />
        <path d="M1031 843L1236 742V748L1031 849z" fill="#7a7d8d" />
        <path d="M1249 720C1248 732 1244 738 1236 742V748C1248 744 1255 734 1255.500 718.500z" fill="#7a7d8d" />
        <path d="M1246.500 440L1253 437L1255.500 718.500L1249 720z" fill="#6a6d7e" />
        <path d="M891.500 153.500L898 150L1253 437L1246.500 440z" fill="#fff" />
        <path d="M891.500 153.500L1246.500 440L1249 720L893.500 436z" fill="#757789" />
        <path d="M893.500 436L1249 720C1248 732 1244 738 1236 742L880.500 455.500C888 452 892 446 893.500 436z" fill="url(#bend)" />
        <path d="M880.500 455.500L1236 742L1031 843L676 557z" fill="#fff" />
        <path
          d="M1035 512C1027 514 1022 522 1018 536C1015 544 1010 551 1004 556C994 565 983 578 983.500 590C984 596 985 598 986.500 602L1030 600V540z"
          fill="#6a6d7e"
        />
        <path
          d="M1035 512C1050 507 1066 516 1078 528C1104 555 1116 588 1124 622C1124 632 1121 638 1111 641C1083 650 1050 650 1022 637C998 626 984 610 985 591C986 579 996 568 1005 562C1013 556 1019 548 1023 538C1026 530 1027 518 1035 512z"
          fill="url(#opening)"
        />
        <path d="M1018 536l6-2M1004 556l2 5M1249 720l7-1.500M1236 742v6" fill="none" />
      </g>

      <g strokeWidth="4">
        <path d="M322 923L340 914" stroke="#b01a28" />
        <path d="M336 909l10 1.500-6 7z" fill="#b01a28" />
        <path d="M322 923l13 9" stroke="#1a22b0" />
        <path d="M336 927l5 9-10-1z" fill="#1a22b0" />
        <path d="M322 924V908" stroke="#126a22" />
        <path d="M317 911h10l-5-11z" fill="#126a22" />
      </g>
      <g fontFamily="Liberation Serif, serif" fontSize="12" fontWeight="bold" textAnchor="middle">
        <text x="322" y="898" fill="#1a8a2f">Y</text>
        <text x="349" y="913" fill="#f0304a">X</text>
        <text x="343" y="944" fill="#2a32e8">Z</text>
      </g>
    </svg>
  );
}

function Viewport() {
  return (
    <main className="relative col-start-3 row-span-2 row-start-1 overflow-hidden">
      <Backdrop />
      <Model />
      <div className="relative flex justify-center pt-0.5 pr-1.5">
        <ToolRow tools={VIEW_TOOLS} narrow />
        <div className="absolute top-[3px] right-1.5 flex">
          {['minimize', 'restore', 'close'].map((name) => (
            <button key={name} aria-label={`document ${name}`} className="flex h-6 w-[23px] items-center justify-center">
              <Icon name={name} className="h-3.5 w-3.5" />
            </button>
          ))}
        </div>
      </div>
      <div className="absolute top-[50px] right-0 flex flex-col">
        {['home', 'library', 'folder', 'swSearch', 'palette', 'sphere'].map((name) => (
          <button
            key={name}
            aria-label={name}
            className={clsx(
              'flex h-6 w-[25px] items-center justify-center rounded-l border border-r-0 border-[#6e7290]',
              name === 'palette' ? 'bg-[#eef0f7]' : 'bg-[#b4b8cd]',
            )}
          >
            <Icon name={name} />
          </button>
        ))}
      </div>
    </main>
  );
}

function SheetTabs() {
  return (
    <nav className="col-span-2 col-start-2 row-start-3 flex items-start border-t border-black bg-[#e1e4ec] text-xs leading-[13px]">
      <div className="flex pr-0.5 pl-px">
        {['M4 1v7M8 1L5 4.500 8 8z', 'M7 1L3 4.500 7 8z', 'M3 1l4 3.500L3 8z', 'M6 1v7M2 1l3 3.500L2 8z'].map((d) => (
          <button key={d} aria-label="scroll tabs" className="flex h-[13px] w-4 items-center justify-center border border-[#8a8d9f] bg-[#a9acbc]">
            <svg viewBox="0 0 10 9" className="h-[9px] w-2.5">
              <path d={d} fill="#777b8e" stroke="#777b8e" />
            </svg>
          </button>
        ))}
      </div>
      <button className="h-3.5 border-l border-black px-[9px] text-black">模型</button>
      <button className="h-[13px] border-r-2 border-b-2 border-l border-[#3a3c48] bg-[#b4b6c6] pr-3 pl-1.5 leading-[12px] text-black">動作研究 1</button>
    </nav>
  );
}

function BottomToolbar() {
  return (
    <div className="flex h-[30px] shrink-0 items-center border-t border-b border-t-white border-b-[#6a6c78] bg-linear-to-b from-[#f3f4fb] to-[#cdcfdf]">
      <div className="flex h-full w-[146px] items-center border-r border-[#9a9cae] pl-1.5">
        <span className="mr-2.5 h-6 border-l-2 border-dotted border-[#9498b0]" />
        <div className="grid w-[98px] items-center">
          <select aria-label="configuration" disabled className="col-start-1 row-start-1 h-5 appearance-none border border-white bg-[#ece9d8]" />
          <svg viewBox="0 0 14 18" className="pointer-events-none col-start-1 row-start-1 mr-px h-[18px] w-3.5 justify-self-end">
            <path d="M0 0h14v18H0z" fill="#eceadf" stroke="#d8d6c8" />
            <path d="M4 7l3 4 3-4" fill="none" stroke="#b8b6a6" strokeWidth="2" />
          </svg>
        </div>
        <button aria-label="cubeGray" className="flex w-[22px] items-center justify-center">
          <Icon name="cubeGray" />
        </button>
      </div>
      <div className="w-[122px]" />
      <div className="flex h-full items-center border-r border-l border-r-[#9a9cae] border-l-[#9a9cae] pr-1.5 pl-1.5">
        <span className="mr-1.5 h-6 border-l-2 border-dotted border-[#9498b0]" />
        <ToolRow tools={[t('cubeGray'), t('paint'), t('lineWeight'), t('lineStyle'), t('lineColor')]} />
      </div>
    </div>
  );
}

function Ticks() {
  return (
    <span className="flex gap-[7px]">
      {[0, 1, 2].map((i) => (
        <span key={i} className="h-3.5 w-0.5 border-l border-l-[#c4c6d2] bg-white" />
      ))}
    </span>
  );
}

function StatusBar() {
  return (
    <footer className="flex h-6 shrink-0 items-center border-t border-white bg-linear-to-b from-[#d4d6e2] to-[#adb0c0] pb-1 pl-0.5 text-xs text-black">
      <span className="font-['Liberation_Serif','Noto_Sans_CJK_TC',serif]">SolidWorks Office Premium 2008</span>
      <div className="ml-auto flex items-center gap-1 pr-4">
        <Ticks />
        <span>正在編輯：零件</span>
        <Ticks />
        <button aria-label="help" className="ml-1.5">
          <Icon name="helpBox" className="h-3.5 w-3.5" />
        </button>
        <button aria-label="tags" className="ml-11">
          <Icon name="tag" />
        </button>
      </div>
    </footer>
  );
}

const TASKS = [
  { icon: 'sw', label: 'SolidWorks Office Pre...', active: true },
  { icon: 'chrome', label: '求大嬸看看两个孔...' },
  { icon: 'ppt', label: 'Microsoft PowerPoint ...' },
];

function Taskbar() {
  return (
    <div className="relative flex h-[30px] shrink-0 items-stretch border-t border-[#4a86f0] bg-linear-to-b from-[#3f80ee] via-[#2459d8] to-[#1d4cc4] font-['Liberation_Serif','Noto_Sans_CJK_TC',serif] text-white">
      <button className="flex w-[90px] items-center gap-1 rounded-r-xl bg-linear-to-b from-[#63b05f] via-[#3c983c] to-[#2a7c2a] pl-2.5 font-['Liberation_Sans','Noto_Sans_CJK_TC',sans-serif] text-base italic">
        <Icon name="flag" className="h-5 w-5" />
        開始
      </button>
      <div className="flex w-[159px] items-center gap-[7px] pl-3">
        {['chrome', 'sw', 'media', 'ie', 'desktop'].map((name) => (
          <button key={name} aria-label={name}>
            <Icon name={name} />
          </button>
        ))}
      </div>
      <div className="flex items-center gap-0.5">
        {TASKS.map(({ icon, label, active }) => (
          <button
            key={label}
            className={clsx(
              'flex h-[26px] w-[158px] items-center gap-[3px] rounded-sm border pl-2.5 text-xs whitespace-nowrap',
              active ? 'border-[#123a94] bg-[#1d4bb2]' : 'border-[#3a78ec] bg-linear-to-b from-[#5293fb] to-[#3577ec]',
            )}
          >
            <Icon name={icon} />
            {label}
          </button>
        ))}
      </div>
      <div className="ml-auto flex items-center gap-1 pr-5 text-xs">
        <span>CH</span>
        <span className="text-[#d8f4e8]">書</span>
      </div>
      <div className="ml-[116px] flex w-[83px] items-center justify-end border-l border-[#123f9c] bg-linear-to-b from-[#2aa8f2] to-[#1590e2] pr-3 text-xs">
        下午 05:08
      </div>
      <span className="absolute right-[72px] bottom-[7px]">
        <Icon name="tray" />
      </span>
      <p className="absolute right-[18px] bottom-0.5 font-['DejaVu_Sans','Noto_Sans_CJK_SC',sans-serif] text-base leading-6 font-bold whitespace-nowrap text-white [text-shadow:1px_0_#e8202a,-1px_0_#e8202a,0_1px_#e8202a,0_-1px_#e8202a,1px_1px_#e8202a,-1px_-1px_#e8202a,1px_-1px_#e8202a,-1px_1px_#e8202a]">
        三维网www.3dportal.cn
      </p>
    </div>
  );
}

export default function App() {
  return (
    <div className="flex h-screen flex-col overflow-hidden bg-[#d6d8e6] font-['Liberation_Sans','Noto_Sans_CJK_TC',sans-serif]">
      <TitleBar />
      <div className="flex h-[29px] shrink-0 items-center border-b border-[#4a4c5c] bg-linear-to-b from-[#fbfbff] via-[#e8e9f6] to-[#cbccdf] pl-1.5">
        <ToolRow tools={SKETCH_TOOLS} />
      </div>
      <div className="grid min-h-0 flex-1 grid-cols-[87px_195px_minmax(0,1fr)] grid-rows-[17px_minmax(0,1fr)_15px]">
        <CommandTabs />
        <div className="col-start-1 row-span-2 row-start-2 flex items-start bg-linear-to-b from-[#d2d2e6] to-[#b9c0d6]">
          <div className="flex w-11 flex-col">
            <ToolColumn tools={FEATURE_TOOLS} pressed="measure" />
            <ToolColumn tools={SHEET_TOOLS} />
          </div>
          <ToolColumn tools={SURFACE_TOOLS} className="mt-[7px] w-[43px]" />
        </div>
        <FeatureManager />
        <Viewport />
        <SheetTabs />
      </div>
      <BottomToolbar />
      <StatusBar />
      <Taskbar />
    </div>
  );
}
